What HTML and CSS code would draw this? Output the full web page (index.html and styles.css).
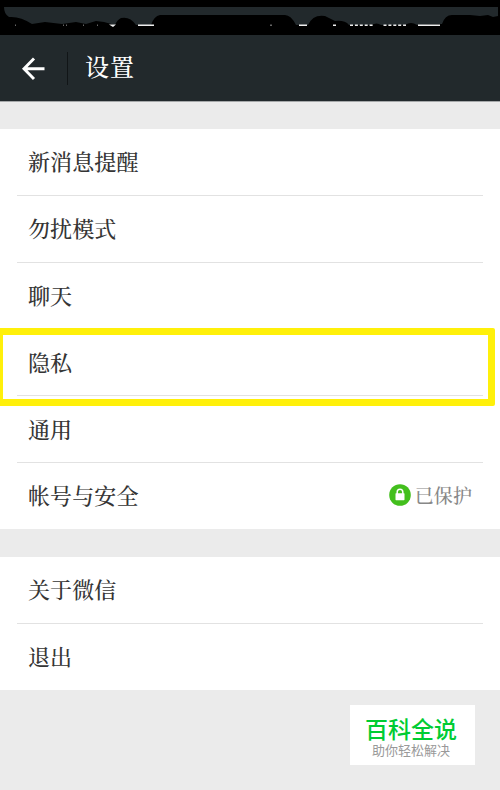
FILE: index.html
```html
<!DOCTYPE html>
<html lang="zh-CN">
<head>
    <meta charset="UTF-8">
    <meta name="viewport" content="width=device-width, initial-scale=1.0">
    <title>设置</title>
    <link rel="stylesheet" href="styles.css">
</head>
<body>

<!-- Status bar -->
<svg class="status-bar" width="500" height="35" viewBox="0 0 500 35">
    <rect width="500" height="35" fill="#000"/>
    <path fill="#22292c" d="M4 7H498V16L493 17L488 15L480 16L470 15H452Q445 15 442 24L417 25Q411 21 405 25H381Q377 22 371 25H349Q345 20 335 21L325 16Q313 14 308 25H296Q291 15 285 15H160Q154 16 151 25H136Q130 16 121 18Q117 20 115 25L104 22L96 21L86 24L76 22L62 24L45 22L32 24Q20 16 9 17Q4 14 4 7Z"/>
    <g stroke="#eee" stroke-width="1.5">
        <path d="M138 25.3H154M299 25.3H307M333 25.3H336M418 25.3H440"/>
        <path d="M350 25.3H373M383.500 25.3H406" stroke-dasharray="3 1.900"/>
        <path d="M15 25.300h1M63 25.300h1M66 25.300h1M83 25.300h1M97 25.300h1M270 25.300h2" stroke="#666"/>
    </g>
    <path fill="#eee" d="M109 24.500h7l-3 2.500z"/>
</svg>

<!-- Title bar -->
<header class="header">
    <svg class="back-icon" width="24" height="24" viewBox="0 0 24 24">
        <path d="M13 1.500L3 11.700L13 21.900M3 11.700H23.500" fill="none" stroke="#fff" stroke-width="2.900"/>
    </svg>
    <span class="divider"></span>
    <h1>设置</h1>
</header>

<main>
    <ul class="group">
        <li class="row">新消息提醒</li>
        <li class="row">勿扰模式</li>
        <li class="row">聊天</li>
        <li class="row highlighted">隐私</li>
        <li class="row">通用</li>
        <li class="row">
            帐号与安全
            <span class="status">
                <svg width="22" height="22" viewBox="0 0 22 22">
                    <circle cx="11" cy="11" r="10.800" fill="#43bf1d"/>
                    <path d="M8.200 10V8a2.800 2.800 0 0 1 5.600 0V10" fill="none" stroke="#fff" stroke-width="1.500"/>
                    <rect x="6.500" y="9.200" width="9" height="7" rx=".6" fill="#fff"/>
                </svg>
                已保护
            </span>
        </li>
    </ul>

    <ul class="group">
        <li class="row">关于微信</li>
        <li class="row">退出</li>
    </ul>
</main>

<!-- Corner badge -->
<div class="badge">
    <strong>百科全说</strong>
    <span>助你轻松解决</span>
</div>

</body>
</html>
```
FILE: styles.css
```css
*,
*::after {
    box-sizing: border-box;
}

body {
    width: 500px;
    height: 790px;
    margin: 0;
    position: relative;
    overflow: hidden;
    background-color: #ebebeb;
    color: #353535;
    font-family: "Noto Serif CJK SC", "Noto Sans CJK SC", serif;
}

.status-bar {
    display: block;
}

.header {
    display: flex;
    align-items: center;
    height: 66px;
    padding-left: 21px;
    background-color: #22292c;
    box-shadow: 0 1px 0 #a5a8a9;
    color: #fff;
}

.back-icon {
    margin-top: 2px;
}

.divider {
    width: 1px;
    height: 33px;
    margin: 0 17px 0 22px;
    background-color: #111517;
}

h1 {
    margin: 0;
    padding-bottom: 5px;
    font-size: 24px;
    font-weight: 500;
    letter-spacing: 1px;
    line-height: 36px;
}

.group {
    height: 400px;
    margin: 28px 0 0;
    padding: 0 17px;
    display: grid;
    grid-auto-rows: 66.8px;
    background-color: #fff;
    list-style: none;
}

.group + .group {
    height: 133px;
}

.row {
    display: flex;
    align-items: center;
    justify-content: space-between;
    position: relative;
    padding: 0 11px 1px;
    border-bottom: 1px solid #e2e2e2;
    font-size: 22px;
    font-weight: 500;
    letter-spacing: 0.1px;
    line-height: 32px;
}

.row:last-child {
    border-bottom-color: transparent;
}

/* yellow frame drawn over the selected row */
.highlighted::after {
    content: "";
    position: absolute;
    top: -1px;
    left: -21px;
    width: 499px;
    height: 78px;
    border: 7px solid #fff00a;
    border-radius: 2px;
    z-index: 1;
}

.status {
    display: flex;
    align-items: center;
    gap: 4px;
    color: #888;
    font-size: 19px;
    font-weight: 500;
}

.badge {
    position: absolute;
    left: 350px;
    top: 705px;
    width: 125px;
    height: 60px;
    display: flex;
    flex-direction: column;
    align-items: center;
    padding: 10px 3px 0 0;
    background-color: #fff;
    font-family: "Noto Sans CJK SC", sans-serif;
}

.badge strong {
    color: #00cc33;
    font-size: 23px;
    font-weight: 500;
    line-height: 27px;
}

.badge span {
    color: #999;
    font-size: 13px;
    line-height: 16px;
}
```
